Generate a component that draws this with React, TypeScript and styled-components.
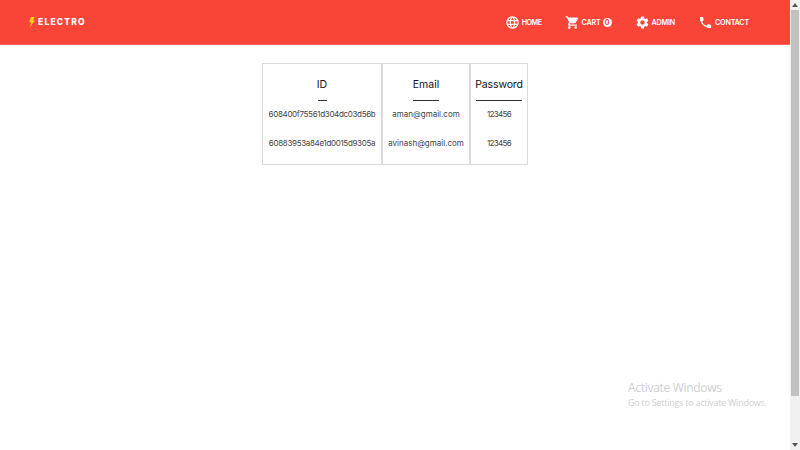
import React from "react";
import styled, { createGlobalStyle } from "styled-components";
import { MdLanguage, MdShoppingCart, MdSettings, MdPhone } from "react-icons/md";

const Global = createGlobalStyle`
  html, body { margin: 0; padding: 0; height: 100%; overflow: hidden; background: #fff; }
  #root { height: 100%; }
  * { box-sizing: border-box; }
`;

const Page = styled.div`
  display: flex;
  width: 800px;
  height: 450px;
  font-family: "Inter", "Liberation Sans", sans-serif;
  position: relative;
`;

const Main = styled.div`
  flex: 1;
  min-width: 0;
  display: flex;
  flex-direction: column;
`;

const Header = styled.header`
  height: 45px;
  background: #f94537;
  border-bottom: 1px solid #fb6a5e;
  display: flex;
  align-items: center;
  justify-content: space-between;
  padding: 0 41px 0 29px;
`;

const Logo = styled.div`
  display: flex;
  align-items: center;
  gap: 3px;
  color: #fff;
  font-size: 8.5px;
  font-weight: 800;
  letter-spacing: 1.2px;
`;

const Nav = styled.nav`
  display: flex;
  align-items: center;
  gap: 23px;
`;

const NavItem = styled.a<{ $ls?: number }>`
  display: flex;
  align-items: center;
  gap: 2px;
  color: #fff;
  font-size: 7.2px;
  font-weight: 600;
  letter-spacing: ${(p) => p.$ls ?? -0.2}px;
  white-space: nowrap;
`;

const Badge = styled.span`
  display: inline-flex;
  align-items: center;
  justify-content: center;
  width: 9px;
  height: 9px;
  border-radius: 50%;
  background: #fff;
  color: #f94537;
  font-size: 7px;
  font-weight: 700;
`;

const Content = styled.main`
  display: flex;
  justify-content: center;
  padding-top: 18px;
`;

const Table = styled.div`
  display: flex;
`;

const Column = styled.div<{ $w: number }>`
  width: ${(p) => p.$w}px;
  height: 102px;
  border: 1px solid #dadada;
  display: flex;
  flex-direction: column;
  align-items: center;
`;

const Title = styled.div<{ $line: number; $ls: number }>`
  width: ${(p) => p.$line}px;
  height: 37px;
  padding-top: 14px;
  font-size: 10.5px;
  line-height: 14px;
  font-weight: 400;
  letter-spacing: ${(p) => p.$ls}px;
  color: #111;
  white-space: nowrap;
  display: flex;
  justify-content: center;
  border-bottom: 1px solid #333;
`;

const Values = styled.div`
  display: flex;
  flex-direction: column;
  margin-top: -1.5px;
`;

const Value = styled.div<{ $ls: number }>`
  height: 29px;
  display: flex;
  align-items: center;
  justify-content: center;
  font-size: 8px;
  color: #444;
  white-space: nowrap;
  letter-spacing: ${(p) => p.$ls}px;
`;

const Scrollbar = styled.div`
  width: 10px;
  background: #f1f1f1;
  display: flex;
  flex-direction: column;
  align-items: center;
`;

const Arrow = styled.div`
  height: 10px;
  flex: none;
  display: flex;
  align-items: center;
  justify-content: center;
  svg { display: block; }
`;

const Track = styled.div`
  flex: 1;
  width: 100%;
  display: flex;
  justify-content: center;
`;

const Thumb = styled.div`
  width: 8px;
  height: 386px;
  background: #c1c1c1;
`;

const Watermark = styled.div`
  position: absolute;
  left: 628px;
  top: 380px;
  font-family: "Open Sans", "Liberation Sans", sans-serif;
  color: #cfcfcf;
  pointer-events: none;
  white-space: nowrap;
`;

const WmTitle = styled.div`
  font-size: 12px;
  line-height: 16px;
  letter-spacing: -0.3px;
`;

const WmSub = styled.div`
  font-size: 9px;
  line-height: 13px;
  letter-spacing: -0.25px;
`;

const columns = [
  { title: "ID", w: 120, line: 9, tls: 0, vls: -0.33, values: ["608400f75561d304dc03d56b", "60883953a84e1d0015d9305a"] },
  { title: "Email", w: 88, line: 26, tls: 0, vls: 0, values: ["aman@gmail.com", "avinash@gmail.com"] },
  { title: "Password", w: 58, line: 46, tls: -0.15, vls: -0.7, values: ["123456", "123456"] },
];

export default function App() {
  return (
    <Page>
      <Global />
      <Main>
        <Header>
          <Logo>
            <svg width="6" height="10" viewBox="0 0 6 10">
              <path d="M2 0 H5.6 L4 3.6 H6 L1 10 L2.2 5.2 H0 Z" fill="#ffd21a" />
            </svg>
            ELECTRO
          </Logo>
          <Nav>
            <NavItem $ls={-0.5}><MdLanguage size={15} />HOME</NavItem>
            <NavItem><MdShoppingCart size={15} />CART<Badge>0</Badge></NavItem>
            <NavItem><MdSettings size={15} />ADMIN</NavItem>
            <NavItem><MdPhone size={15} />CONTACT</NavItem>
          </Nav>
        </Header>
        <Content>
          <Table>
            {columns.map((c) => (
              <Column key={c.title} $w={c.w}>
                <Title $line={c.line} $ls={c.tls}>{c.title}</Title>
                <Values>
                  {c.values.map((v, i) => (
                    <Value key={i} $ls={c.vls}>{v}</Value>
                  ))}
                </Values>
              </Column>
            ))}
          </Table>
        </Content>
      </Main>
      <Scrollbar>
        <Arrow>
          <svg width="6" height="4" viewBox="0 0 6 4"><path d="M3 0 L6 4 L0 4 Z" fill="#555" /></svg>
        </Arrow>
        <Track><Thumb /></Track>
        <Arrow>
          <svg width="6" height="4" viewBox="0 0 6 4"><path d="M0 0 L6 0 L3 4 Z" fill="#555" /></svg>
        </Arrow>
      </Scrollbar>
      <Watermark>
        <WmTitle>Activate Windows</WmTitle>
        <WmSub>Go to Settings to activate Windows.</WmSub>
      </Watermark>
    </Page>
  );
}
